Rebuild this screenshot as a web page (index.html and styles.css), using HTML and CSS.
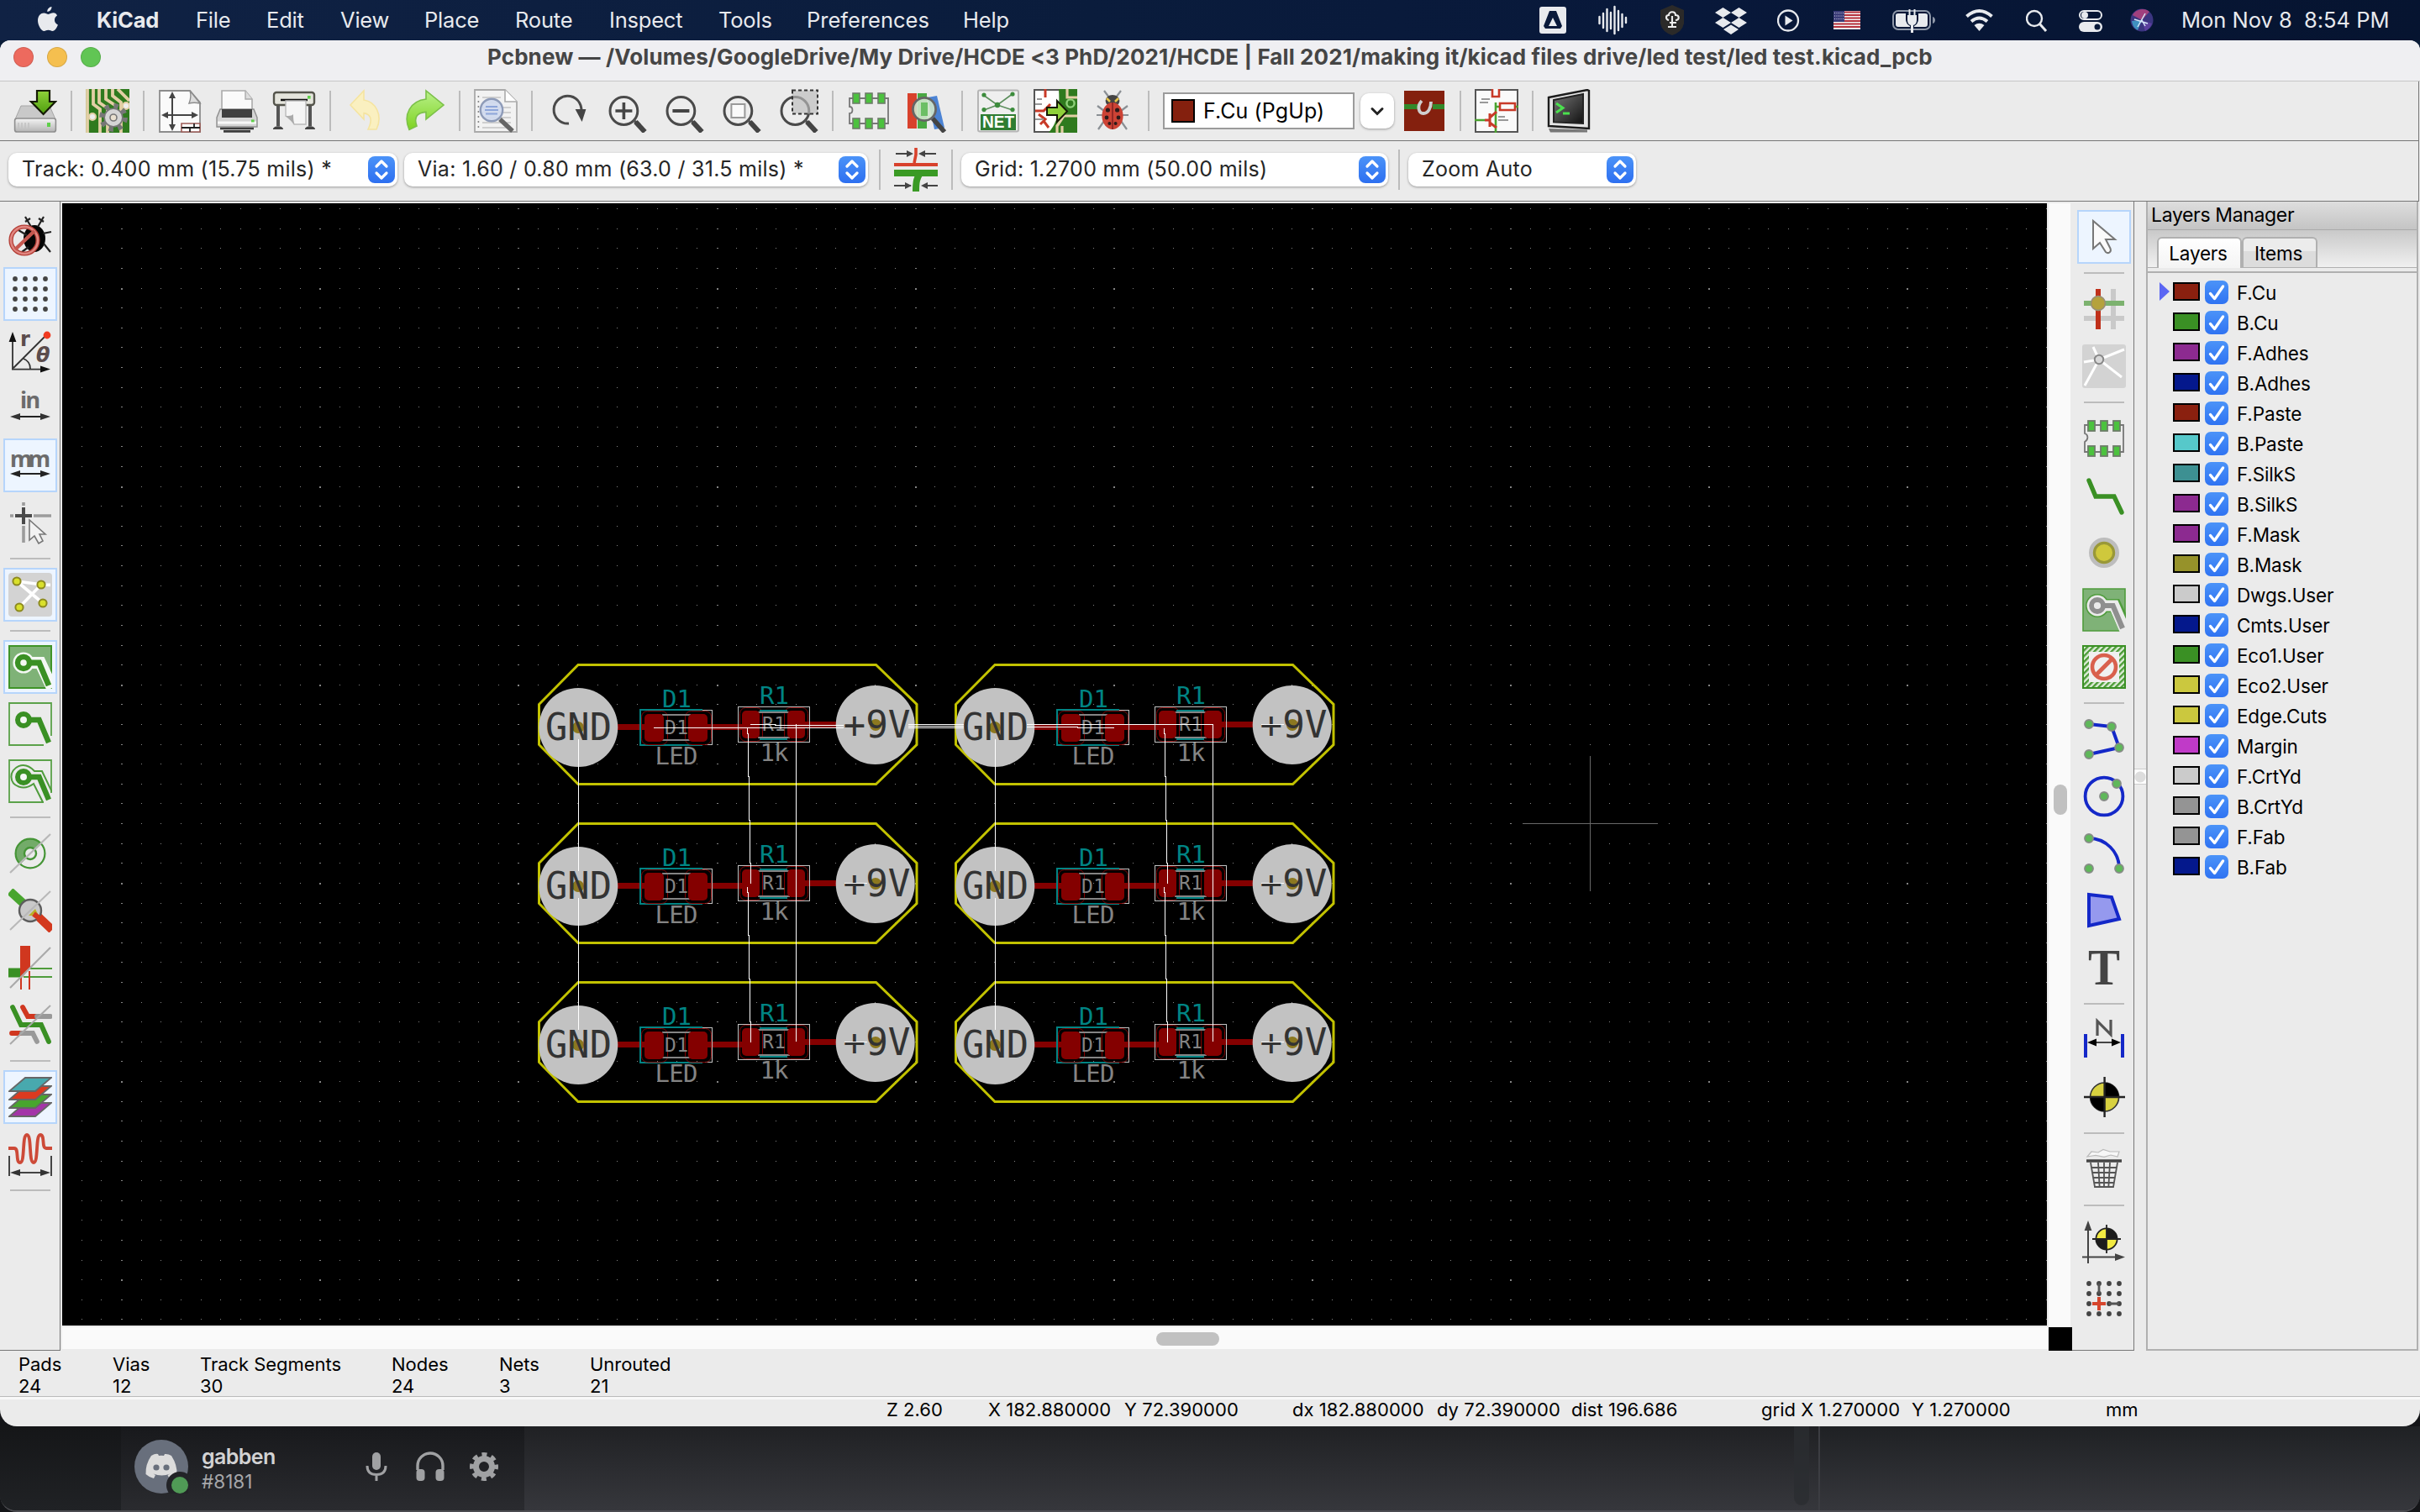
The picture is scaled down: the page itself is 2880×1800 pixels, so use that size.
FILE: index.html
```html
<!DOCTYPE html>
<html lang="en">
<head>
<meta charset="utf-8">
<title>Pcbnew</title>
<link rel="stylesheet" href="styles.css">
</head>
<body>
<svg class="sprite" width="0" height="0">
  <defs>
    <linearGradient id="gGreen" x1="0" y1="0" x2="0" y2="1"><stop offset="0" stop-color="#8fd13a"/><stop offset="1" stop-color="#4e9e0e"/></linearGradient>
    <linearGradient id="gRedo" x1="0" y1="0" x2="0" y2="1"><stop offset="0" stop-color="#b9f08a"/><stop offset="1" stop-color="#7ed321"/></linearGradient>
    <linearGradient id="gTerm" x1="0" y1="0" x2="1" y2="1"><stop offset="0" stop-color="#777"/><stop offset="1" stop-color="#111"/></linearGradient>
    <linearGradient id="gDrive" x1="0" y1="0" x2="0" y2="1"><stop offset="0" stop-color="#f4f4f4"/><stop offset="1" stop-color="#b4b4b4"/></linearGradient>
    <pattern id="hatch" width="2.4" height="2.4" patternUnits="userSpaceOnUse" patternTransform="rotate(45)"><rect width="2.4" height="2.4" fill="#dfeeda"/><rect width="1.2" height="2.4" fill="#4a9a35"/></pattern>
  </defs>
  <symbol id="save" viewBox="0 0 26 26"><path d="M4.500 10h17l3.500 8H1z" fill="#c9c9c9" stroke="#a5a5a5" stroke-width=".5"/><rect x=".8" y="17.500" width="24.400" height="8" rx="1.300" fill="url(#gDrive)" stroke="#8e8e8e" stroke-width=".8"/><path d="M3 20v4M5 20v4M7 20v4M9 20v4" stroke="#c2c2c2" stroke-width=".8"/><rect x="20" y="20" width="2" height="2.500" fill="#5fd04a"/><path d="M14 1h7.500v6.500H25L17.800 15 10.500 7.500H14z" fill="url(#gGreen)" stroke="#151a05" stroke-width="1.100"/></symbol>
  <symbol id="board" viewBox="0 0 26 26"><path d="M0 0h26v26H0z" fill="#2f7a1e"/><path d="M1 0v26M4.500 0v9l4 3v14M8 0v8l5 3.500V26M12 0v6l6 4M16 0v4l5 4v18M19 0l7 7" stroke="#e3cfa5" stroke-width="1.900" fill="none"/><circle cx="4" cy="16.500" r="2" fill="#eee" stroke="#e3cfa5"/><circle cx="24" cy="10" r="2" fill="#eee" stroke="#e3cfa5"/><circle cx="16.500" cy="17" r="6.800" fill="none" stroke="#777" stroke-width="3.300" stroke-dasharray="2.600 2.740"/><circle cx="16.500" cy="17" r="5.400" fill="#d5d5d5" stroke="#777" stroke-width=".8"/><circle cx="16.500" cy="17" r="2" fill="#e9e0cf" stroke="#777" stroke-width=".8"/></symbol>
  <symbol id="pageset" viewBox="0 0 26 26"><path d="M1 1h18l6 7v17.500H1z" fill="#fafafa" stroke="#8c8c8c" stroke-width=".9"/><path d="M19 1c1 3 .5 5-.5 7.500 2-.5 4-.5 6.500 0z" fill="#ddd" stroke="#8c8c8c" stroke-width=".7"/><path d="M8.500 3v21M3 15.500h20" stroke="#444" stroke-width="1"/><path d="M8.500 1.500l2 4h-4zM8.500 25l2-4h-4zM2 15.500l4-2v4zM24 15.500l-4-2v4z" fill="#444"/><path d="M14 20.500h11v5H14z" fill="#fff" stroke="#9b5b55" stroke-width=".8"/><path d="M14 23h11M19 23v2.500M21.500 20.500V23" stroke="#222" stroke-width=".9"/></symbol>
  <symbol id="print" viewBox="0 0 26 26"><path d="M4 13V1h14l4 5v8H4z" fill="#fafafa" stroke="#aaa" stroke-width=".8"/><path d="M18 1v5h4" fill="#ddd" stroke="#aaa" stroke-width=".7"/><path d="M3 12h20l2 5v5.500H1V17z" fill="#d5d5d5" stroke="#8e8e8e" stroke-width=".7"/><path d="M4 12h18v5H4z" fill="#3f3f3f"/><path d="M3 23.500h20M5 25.200h16" stroke="#3b3b3b" stroke-width="1.300"/><path d="M1.500 20h23" stroke="#f8f8f8" stroke-width="1.500"/><rect x="21.500" y="18.200" width="1.800" height="1.500" fill="#5fd04a"/></symbol>
  <symbol id="plot" viewBox="0 0 26 26"><rect x="1" y="2" width="24" height="7.500" rx="1.500" fill="#e5e5dd" stroke="#55554c" stroke-width="1.200"/><path d="M5 6.500h16" stroke="#111" stroke-width="1.200"/><rect x="21" y="4" width="1.800" height="1.800" fill="#5fd04a"/><path d="M3.500 10v12M22.500 10v12" stroke="#555" stroke-width="2"/><path d="M.5 24c0-2.500 6-2.500 6 0zM19.500 24c0-2.500 6-2.500 6 0z" fill="#444"/><path d="M8 7h12v14h-7c-1-2-3-4-5-5z" fill="#f5f5f5" stroke="#bbb" stroke-width=".7"/><path d="M8 16c2 0 3.500 0 4.500-1 0 3 .3 4.500.8 6z" fill="#aaa"/></symbol>
  <symbol id="undo" viewBox="0 0 26 26"><path d="M11.500 1v5.500c7 1 11.500 9 7.500 17.500h-5c3-6 1.500-9-2.500-9.700V18L3.500 9.500z" fill="#faf0c0" stroke="#f5e4a0" stroke-width=".8"/></symbol>
  <symbol id="redo" viewBox="0 0 26 26"><path d="M14.500 1v5C5.500 7 .5 15 4.500 24.200L9 22c-2-5.500.5-8 5.500-8.300V18L25 9.500z" fill="url(#gRedo)" stroke="#7cc04a" stroke-width=".8"/></symbol>
  <symbol id="find" viewBox="0 0 26 26"><path d="M.5.500h18l7 7v18H.5z" fill="#f2f2f2" stroke="#aaa" stroke-width=".9"/><path d="M18.500.500v7h7" fill="#fff" stroke="#aaa" stroke-width=".8"/><path d="M5 5h11M5 8h10M5 11h17M5 14h17M5 17h17M5 20h17M5 23h17" stroke="#c4c4c4" stroke-width=".8"/><path d="M2.700 4v20" stroke="#888" stroke-width=".8" stroke-dasharray="1 2"/><circle cx="10.500" cy="12.500" r="6.600" fill="#cfd9ee" fill-opacity=".9" stroke="#8e9bb8" stroke-width="1.200"/><path d="M7 10.500h7M6.500 12.500h8M7 14.700h7" stroke="#8ea6da"/><path d="M15.500 18l7.500 7" stroke="#666" stroke-width="2.700"/></symbol>
  <symbol id="refresh" viewBox="0 0 26 26"><path d="M13.500 20.500A8.200 8.200 0 1 1 20.500 15" fill="none" stroke="#4a4a4a" stroke-width="1.500"/><path d="M17.300 12h6.400l-2.400 7.500z" fill="#444"/></symbol>
  <symbol id="lens" viewBox="0 0 26 26"><circle cx="12.200" cy="13" r="8.200" fill="#ededed" stroke="#4a4a4a" stroke-width="1.500"/><path d="M17.700 18.500l3 2" stroke="#555" stroke-width="1.500"/><path d="M19.200 19.500l5.500 6" stroke="#444" stroke-width="3"/></symbol>
  <symbol id="zin" viewBox="0 0 26 26"><use href="#lens"/><path d="M7.200 13h10M12.200 8v10" stroke="#444" stroke-width="1.800"/></symbol>
  <symbol id="zout" viewBox="0 0 26 26"><use href="#lens"/><path d="M7.200 13h10" stroke="#444" stroke-width="2"/></symbol>
  <symbol id="zfit" viewBox="0 0 26 26"><use href="#lens"/><rect x="8.200" y="9" width="8" height="8" fill="#fafafa" stroke="#999"/></symbol>
  <symbol id="zsel" viewBox="0 0 26 26"><use href="#lens"/><rect x="10.500" y=".7" width="15" height="14" fill="#bbb" fill-opacity=".65" stroke="#333" stroke-width="1" stroke-dasharray="2 1.500"/></symbol>
  <symbol id="fp" viewBox="0 0 26 26"><path d="M1.500 5.500v5c2.300 0 2.300 4 0 4v6h23v-15z" fill="none" stroke="#777" stroke-width=".9"/><g fill="#4cc23e" stroke="#6d7d69" stroke-width=".8"><rect x="3.500" y="2.500" width="4" height="6"/><rect x="11" y="2.500" width="4" height="6"/><rect x="18.500" y="2.500" width="4" height="6"/><rect x="3.500" y="17.500" width="4" height="6"/><rect x="11" y="17.500" width="4" height="6"/><rect x="18.500" y="17.500" width="4" height="6"/></g></symbol>
  <symbol id="lib" viewBox="0 0 26 26"><path d="M2 2.500h5.500v21H2z" fill="#d8412c"/><path d="M8 2.500h5.500v21H8z" fill="#4aa843"/><path d="M14 5l5.500-1 4.500 19-6 1z" fill="#4b83d4"/><circle cx="12" cy="12" r="6.800" fill="#cfe5cc" fill-opacity=".9" stroke="#666" stroke-width="1.400"/><path d="M10 8h4v8h-4z" fill="#6cbf65"/><path d="M17 17.500l7 8" stroke="#444" stroke-width="2.800"/></symbol>
  <symbol id="upd" viewBox="0 0 26 26"><path d="M.5.500h25v25H.5z" fill="#fff" stroke="#555"/><path d="M15 0h11v26H9c4-5 7-10 6-26z" fill="#2f7a1e"/><path d="M26 16h-8l-4 6v4M20 0v5h6M17 26v-4" stroke="#e3cfa5" stroke-width="1.600" fill="none"/><circle cx="22" cy="8.500" r="2.300" fill="none" stroke="#8fd07a" stroke-width="1.200"/><path d="M7 0v5M1 13h5l4-4M6 19l3 4M3 15l4 3-3 3" stroke="#c83a28" stroke-width="1.500" fill="none"/><path d="M1 9h4M2 6h3M1 18h5" stroke="#999" stroke-width=".9"/><path d="M8 11h6V7l6 6.300-6 6.200v-4H8z" fill="#8fd13a" stroke="#151a05" stroke-width="1"/></symbol>
  <symbol id="bug" viewBox="0 0 26 26"><path d="M8 1l3 4M18 1l-3 4M4 10l4 3M22 10l-4 3M3.500 15.500h4M22.500 15.500h-4M4.500 24l3.500-5M21.500 24l-3.500-5" stroke="#8a8f94" stroke-width="1.100"/><ellipse cx="13" cy="7" rx="4.200" ry="3.500" fill="#444"/><path d="M9.500 5.500l2 2M16.500 5.500l-2 2" stroke="#e7c54a" stroke-width="1.300"/><ellipse cx="13" cy="16" rx="6.300" ry="8" fill="#cc4335"/><path d="M13 8v16" stroke="#822" stroke-width=".8"/><g fill="#2d1a1a"><circle cx="10.200" cy="12.500" r="1.300"/><circle cx="15.800" cy="12.500" r="1.300"/><circle cx="9.500" cy="17" r="1.200"/><circle cx="16.500" cy="17" r="1.200"/><circle cx="11.200" cy="20.500" r="1"/><circle cx="14.800" cy="20.500" r="1"/></g></symbol>
  <symbol id="pair" viewBox="0 0 26 26"><path d="M1 1h24v24H1z" fill="#84200e"/><path d="M1 9h24v3H1z" fill="#33892a"/><path d="M9 7h9v6H9z" fill="#84200e"/><path d="M11.500 7c-3 3-2 7.500 1 7.500s4.500-3.500 4.500-7" fill="none" stroke="#cfcfcf" stroke-width="1.900"/></symbol>
  <symbol id="sch" viewBox="0 0 26 26"><path d="M.5.500h25v25H.5z" fill="#fafafa" stroke="#555"/><path d="M12.500 8v14M0 18.500h6M12.500 10.500h3M24 10.500h2M12.500 21v5" stroke="#4aa32f" stroke-width="1.300"/><path d="M10.500 0v4.500h4V0M15 8.500h9v4h-9z" fill="#fafafa" stroke="#c83a28" stroke-width="1.300"/><path d="M6 18.500h3M9 14.500v8M9 17l4-3.500M9 20l4 3" stroke="#c83a28" stroke-width="1.500"/><path d="M4 6h5M3 8h5M14 16.500h4M14 18.500h6" stroke="#999" stroke-width=".9"/></symbol>
  <symbol id="term" viewBox="0 0 26 26"><path d="M1 5L24 .5l1 .5v22.500L1 22z" fill="#e4e4e4" stroke="#1c1c1c" stroke-width="1.200"/><path d="M4 6.500L21.500 3v17.500L4 19.700z" fill="url(#gTerm)" stroke="#222"/><path d="M5.500 8.500l4 2.700-4 2.800M9.500 14.500h4" stroke="#4be04e" stroke-width="1.500" fill="none"/><path d="M1 23.500l23 .8v1.500H2z" fill="#777"/></symbol>
  <symbol id="width" viewBox="0 0 26 26"><path d="M13 0v4l-1 5" stroke="#d8412c" stroke-width="1.800" fill="none"/><path d="M0 10h26" stroke="#d8412c" stroke-width="2"/><path d="M0 15h26M15.500 15c-2 3-2.500 5-2.500 11" stroke="#3a9a24" stroke-width="4" fill="none"/><path d="M1 3.500h9M25 3.500h-9M0 22.500h10M26 22.500h-9" stroke="#444"/><path d="M11.500 3.500l-4-2v4zM14.500 3.500l4-2v4zM10.500 22.500l-4-2v4zM16 22.500l4-2v4z" fill="#444"/></symbol>
  <symbol id="drc" viewBox="0 0 26 26"><ellipse cx="15.500" cy="14" rx="6.500" ry="8" fill="#050505"/><path d="M10 1l3.500 6M21 1l-3.500 6M10 4l3-2M21 4l-3-2M6 9l5 3M25.500 10l-5 1M21 17l4 5M8 22l4-3" stroke="#222" stroke-width="1.100"/><circle cx="9.500" cy="15" r="8" fill="none" stroke="#b33d35" stroke-width="2.600"/><circle cx="9.500" cy="15" r="8" fill="none" stroke="#e08680" stroke-width="1.300"/><path d="M4 20.500L15.500 9.500" stroke="#c65850" stroke-width="2.200"/></symbol>
  <symbol id="dots" viewBox="0 0 26 26"><path d="M4 4h18.100M4 10h18.100M4 16h18.100M4 22h18.100" stroke="#444" stroke-width="2.900" stroke-linecap="round" stroke-dasharray="0 6"/></symbol>
  <symbol id="cursor" viewBox="0 0 26 26"><path d="M1 9h2M15 9h10.500M9 1v2M9 15v10" stroke="#9c9c9c" stroke-width="1.800"/><path d="M4 9h10M9 4v10" stroke="#4a4a4a" stroke-width="2"/><path d="M12.500 11.500v12l3-2.500 2.500 4.500 2.500-1.500-2-4h3.500z" fill="#f2f2f2" stroke="#777" stroke-width=".8"/></symbol>
  <symbol id="rats" viewBox="0 0 26 26"><rect width="26" height="26" rx="2" fill="#d3d3d3"/><path d="M5 5l15 2 5 .2M5 5l15.500 13M6.500 20.500L19.500 7" stroke="#fff" stroke-width="1.800"/><g fill="#d9e02c" stroke="#8d8a20"><circle cx="5" cy="5" r="2.300"/><circle cx="19.500" cy="7" r="2.300"/><circle cx="20.500" cy="18" r="2.300"/><circle cx="6.500" cy="20.500" r="2.300"/></g></symbol>
  <symbol id="zone1" viewBox="0 0 26 26"><path d="M.5.500h25v25H.5z" fill="#7fb277" stroke="#3f9428"/><path d="M9 10.500h10l7 15" stroke="#f4f8f4" stroke-width="7" fill="none"/><circle cx="9" cy="10.500" r="6.300" fill="#f4f8f4"/><path d="M9 10.500h9.300L24 24" stroke="#3a9024" stroke-width="3.400" fill="none"/><circle cx="9" cy="10.500" r="3.500" fill="#f4f8f4" stroke="#3a9024" stroke-width="3.200"/></symbol>
  <symbol id="zone2" viewBox="0 0 26 26"><path d="M21 25.500H.5V.5h25V20" fill="none" stroke="#5ba24a" stroke-width=".9"/><path d="M9 10.500h9.300L24 24" stroke="#3a9024" stroke-width="3.200" fill="none"/><circle cx="9" cy="10.500" r="3.500" fill="#f4f8f4" stroke="#3a9024" stroke-width="3"/></symbol>
  <symbol id="zone3" viewBox="0 0 26 26"><use href="#zone2"/><path d="M26 19.500L20 7h-4.500C9 0 1.500 5 1.700 10.500S9 19 15 14.500l5.500 11" fill="none" stroke="#4f9c3c" stroke-width="1"/></symbol>
  <symbol id="padsk" viewBox="0 0 26 26"><path d="M7 19.500A8.500 8.500 0 1 1 20 7z" fill="#73ab69"/><circle cx="13" cy="13" r="8.700" fill="none" stroke="#459536" stroke-width="1.100"/><circle cx="13" cy="13" r="3.500" fill="#ebebeb" stroke="#459536" stroke-width="1.200"/><path d="M1 24.500l24-23" stroke="#b8b8b8" stroke-width="1.100"/></symbol>
  <symbol id="viask" viewBox="0 0 26 26"><path d="M1 1.500l12 11" stroke="#48a52e" stroke-width="5"/><path d="M14 13l12 11.500" stroke="#d3381d" stroke-width="5"/><circle cx="13" cy="13" r="6.500" fill="#c9c9c9" stroke="#5d5d5d" stroke-width="1.200"/><path d="M16 12l-4 4h6z" fill="#b9b128"/><path d="M15 15l4 3" stroke="#d3381d" stroke-width="3"/><path d="M1 24.500l24-23" stroke="#b8b8b8" stroke-width="1"/></symbol>
  <symbol id="trk" viewBox="0 0 26 26"><path d="M0 16h8" stroke="#3a9024" stroke-width="5.500"/><path d="M13 13.500h13M9 18.500h17" stroke="#4f9c3c"/><path d="M7 0h6v13l-5 6H7z" fill="#d0371f"/><path d="M7.500 18v8M12.500 15v11" stroke="#d0371f"/><path d="M1 25l24-24" stroke="#aaa" stroke-width="1.100"/></symbol>
  <symbol id="hc" viewBox="0 0 26 26"><path d="M2.500 2.500l5 10.500h12l4.500 10" stroke="#3a9024" stroke-width="2.900" fill="none" stroke-linecap="round"/><path d="M8.500 2.500l3 5.500H17M2 18h6" stroke="#d0371f" stroke-width="2.900" fill="none" stroke-linecap="round"/><path d="M17 8h8M8 18h6.500l2.500 5" stroke="#999" stroke-width="2.900" fill="none" stroke-linecap="round"/><path d="M1 24.500l24-23" stroke="#aaa"/></symbol>
  <symbol id="layers" viewBox="0 0 26 26"><g stroke="#666" stroke-width=".9"><path d="M10 16.500h15.500l-9.500 8H.5z" fill="#a335a8"/><path d="M10 11.500h15.500l-9.500 8H.5z" fill="#48a52e"/><path d="M10 6.500h15.500l-9.500 8H.5z" fill="#dc3a20"/><path d="M10 1.500h15.500l-9.500 8H.5z" fill="#48a9ae"/></g></symbol>
  <symbol id="tune" viewBox="0 0 26 26"><path d="M0 9.500h3.500c3 0 .5 8.500 3.500 8.500s1-16.500 4-16.500S12 18 15 18s1-16.500 4-16.500.5 8 3.500 8H26" fill="none" stroke="#cd4a38" stroke-width="1.900"/><path d="M.5 14v12M25.500 14v12M3 24h20" stroke="#444"/><path d="M1 24l6-2v4zM25 24l-6-2v4z" fill="#333"/></symbol>
  <symbol id="select" viewBox="0 0 26 26"><path d="M6.500 3.500v16.500l4-3.500 3.500 5.500c1.500 1.300 3.500 0 2.800-2L14 14.500H19.500z" fill="#fafafa" stroke="#777" stroke-width="1"/></symbol>
  <symbol id="hlnet" viewBox="0 0 26 26"><path d="M18.500 1v24M1 18.500h24" stroke="#c9c9c9" stroke-width="3"/><path d="M9.500 1v24" stroke="#c0301a" stroke-width="3"/><path d="M1 9.500h24" stroke="#7cb26f" stroke-width="3"/><circle cx="9.500" cy="9.500" r="4.200" fill="#b5a23c" stroke="#998f74" stroke-width=".8"/></symbol>
  <symbol id="lrats" viewBox="0 0 26 26"><rect width="26" height="26" rx="1.500" fill="#d3d3d3"/><path d="M10 9L6.500 1.500M10 9l15-6M10 9l-9 1.500M10 9L1.500 24.500M10 9l13.500 10.500" stroke="#fff" stroke-width="1.500"/><circle cx="10" cy="9" r="2.600" fill="#d8d8d8" stroke="#888"/></symbol>
  <symbol id="fp2" viewBox="0 0 26 26"><path d="M1.500 5v5c2 .5 2.500 3.500 0 5v6h23V5z" fill="none" stroke="#777" stroke-width=".9"/><g fill="#4cc23e" stroke="#6d7d69" stroke-width=".9"><rect x="3.500" y="2.500" width="4" height="6"/><rect x="11" y="2.500" width="4" height="6"/><rect x="18.500" y="2.500" width="4" height="6"/><rect x="3.500" y="17.500" width="4" height="6"/><rect x="11" y="17.500" width="4" height="6"/><rect x="18.500" y="17.500" width="4" height="6"/></g></symbol>
  <symbol id="route" viewBox="0 0 26 26"><path d="M4 4l4 9.500h11L23.500 23" stroke="#3a9024" stroke-width="2.700" fill="none" stroke-linecap="round"/></symbol>
  <symbol id="via" viewBox="0 0 26 26"><circle cx="13" cy="13" r="7.800" fill="#999838" stroke="#bdbdbd" stroke-width="2.400"/><circle cx="13" cy="13" r="5" fill="#cfc83c"/></symbol>
  <symbol id="zoneg" viewBox="0 0 26 26"><path d="M.5.500h25v25H.5z" fill="#7fb277" stroke="#4f9c3c" stroke-width=".8"/><path d="M9 10.500h10.500l7 15" stroke="#4f9c3c" stroke-width="8" fill="none"/><circle cx="9" cy="10.500" r="7" fill="#4f9c3c"/><path d="M9 10.500h10l7 16" stroke="#ebebeb" stroke-width="6.500" fill="none"/><circle cx="9" cy="10.500" r="6.200" fill="#ebebeb"/><path d="M9 10.500h9.300L24 24" stroke="#8f8f8f" stroke-width="3.100" fill="none"/><circle cx="9" cy="10.500" r="3.500" fill="#ebebeb" stroke="#8f8f8f" stroke-width="2.900"/></symbol>
  <symbol id="keep" viewBox="0 0 26 26"><path d="M.5.500h25v25H.5z" fill="url(#hatch)" stroke="#3a9024"/><rect x="4" y="4" width="18" height="18" fill="#f0f0f0"/><circle cx="13" cy="13" r="7" fill="none" stroke="#d9604d" stroke-width="2.300"/><path d="M8.500 17.500l9-9" stroke="#d9604d" stroke-width="2.500"/></symbol>
  <symbol id="lines" viewBox="0 0 26 26"><path d="M4 4l13.500 1.500L22 18 4 22" stroke="#1428c8" stroke-width="2" fill="none"/><g fill="#5fb85a" stroke="#868c86" stroke-width=".9"><circle cx="4" cy="4" r="2.500"/><circle cx="17.500" cy="5.500" r="2.500"/><circle cx="22" cy="18" r="2.500"/><circle cx="4" cy="22" r="2.500"/></g></symbol>
  <symbol id="circ" viewBox="0 0 26 26"><circle cx="13" cy="13" r="11.200" fill="none" stroke="#1428c8" stroke-width="1.900"/><g fill="#5fb85a" stroke="#868c86" stroke-width=".9"><circle cx="13" cy="13" r="2.500"/><circle cx="20.500" cy="5.500" r="2.500"/></g></symbol>
  <symbol id="arc" viewBox="0 0 26 26"><path d="M4 4c10 0 18 8 18 18" fill="none" stroke="#1428c8" stroke-width="1.900"/><g fill="#5fb85a" stroke="#868c86" stroke-width=".9"><circle cx="4" cy="4" r="2.500"/><circle cx="22" cy="22" r="2.500"/><circle cx="4" cy="22" r="2.500"/></g></symbol>
  <symbol id="poly" viewBox="0 0 26 26"><path d="M4 3.500L17.500 5 22 18 4 22z" fill="#9599ee" stroke="#1428c8" stroke-width="2"/></symbol>
  <symbol id="dim" viewBox="0 0 26 26"><path d="M2 9.500v14M24 9.500v14" stroke="#1428c8" stroke-width="2"/><path d="M4 14.500h18" stroke="#444"/><path d="M3 14.500l5.500-2.300v4.600zM23 14.500l-5.500-2.300v4.600z" fill="#000"/><path d="M9 10.500V1.800l8 8V1" fill="none" stroke="#555" stroke-width="1.600"/></symbol>
  <symbol id="target" viewBox="0 0 26 26"><circle cx="13.300" cy="13" r="8.500" fill="#d8d140" stroke="#333" stroke-width=".8"/><path d="M13.300 13V4.500a8.500 8.500 0 0 1 8.500 8.500zM13.300 13v8.500A8.500 8.500 0 0 1 4.800 13z" fill="#000"/><path d="M13.300 1v24M1 13h24.500" stroke="#222" stroke-width="1.200"/></symbol>
  <symbol id="trash" viewBox="0 0 26 26"><path d="M3 5.500l2.500-3 4 .5 3-1.800 4 1.300 5.500 0-1 3-4-1-4 1.200-5-1z" fill="#f7f7f7" stroke="#bbb" stroke-width=".6"/><path d="M2.500 8h21" stroke="#444" stroke-width="1.800"/><path d="M5 9l2.500 14.500h11L21 9M5.500 12h15M6 15h14M6.500 18h13M7 21h12M9.500 9l.8 14M13 9v14M16.500 9l-.8 14" fill="none" stroke="#555" stroke-width=".9"/></symbol>
  <symbol id="origin" viewBox="0 0 26 26"><path d="M3.500 26V4M0 22.300h22" stroke="#444"/><path d="M3.500.5l2.200 6H1.300zM25.500 22.300l-6-2.200v4.400z" fill="#444"/><circle cx="14.500" cy="11.500" r="6.300" fill="#f2ea42" stroke="#222" stroke-width=".9"/><path d="M14.500 11.500V5.200a6.300 6.300 0 0 1 6.300 6.300zM14.500 11.500v6.300a6.300 6.300 0 0 1-6.300-6.300z" fill="#1c1c1c"/><path d="M14.500 3v17M6 11.500h17" stroke="#222" stroke-width=".9"/></symbol>
  <symbol id="gorig" viewBox="0 0 26 26"><use href="#dots"/><path d="M10 4v6M16 16h6" stroke="#555" stroke-width="1.400"/><path d="M6 16h8M10 12v8" stroke="#d6452c" stroke-width="2"/></symbol>
</svg>

<div class="desktop">
  <header class="menubar">
    <svg class="apple" viewBox="0 0 26 32"><path d="M17.500 1c.2 3-2.400 6-5.200 6C12 4 14.600 1.200 17.500 1zM24 11.500c-4.500 2.800-3.800 9 .9 11-1 3-3.600 7.500-6.400 7.500-2 0-2.700-1.200-5-1.200s-3.200 1.200-5 1.200C5 30 1 23 1 17.500 1 11.700 4.700 8.500 8.200 8.500c2.300 0 3.900 1.400 5.500 1.400 1.500 0 3.300-1.600 6-1.600 1.800 0 3.400 1.200 4.300 3.200z" fill="#e8eaee"/></svg>
    <nav class="menus"><b style="width:118px">KiCad</b><span style="width:84px">File</span><span style="width:88px">Edit</span><span style="width:100px">View</span><span style="width:108px">Place</span><span style="width:112px">Route</span><span style="width:130px">Inspect</span><span style="width:105px">Tools</span><span style="width:186px" class="wide">Preferences</span><span>Help</span></nav>
    <div class="tray">
      <svg style="width:70px" viewBox="0 0 70 36"><path d="M3 2h26a3 3 0 0 1 3 3v26a3 3 0 0 1-3 3H3a3 3 0 0 1-3-3V5a3 3 0 0 1 3-3zM12 7L5 25l2 3h18l2-3-7-18zM16 15l5 10H11z" fill="#e8eaee" fill-rule="evenodd"/></svg>
      <svg style="width:74px" viewBox="0 0 74 36"><path d="M1.500 14v8M6 10v17M10.500 5v26M15 9v19M19.500 2v32M24 7v23M28.500 11v15M33 15v6" stroke="#e8eaee" stroke-width="2.400" stroke-linecap="round"/></svg>
      <svg style="width:65px" viewBox="0 0 65 36"><path d="M14 0l14 6v16q-2 10-14 14Q2 32 0 22V6z" fill="#2b2a29"/><path d="M9 26h10M11 21h8M14 13v13M10 18c-4-1-4-6 0-6 0-5 8-5 8 0 5 0 5 6 0 6" stroke="#eee" stroke-width="2.100" fill="none"/></svg>
      <svg style="width:74px" viewBox="0 0 74 36"><path d="M9.500 3l9.500 6-9.500 6L0 9zM28.500 3L38 9l-9.500 6L19 9zM9.500 15l9.500 6-9.500 6L0 21zM28.500 15l9.500 6-9.500 6-9.500-6zM19 23.500l9 5.500-9 6-9-6z" fill="#e8eaee"/></svg>
      <svg style="width:67px" viewBox="0 0 67 36"><circle cx="13" cy="18.500" r="12" fill="none" stroke="#e8eaee" stroke-width="2.300"/><path d="M9.500 12.500l9 6-9 6z" fill="#e8eaee"/></svg>
      <svg style="width:70px" viewBox="0 0 70 36"><path d="M0 7h32v22H0z" fill="#f2f2f2"/><path d="M0 8.500h32M0 12h32M0 15.500h32M0 19h32M0 22.500h32M0 26h32" stroke="#b5323c" stroke-width="1.800"/><path d="M0 7h13v13H0z" fill="#3a3c78"/><path d="M1 9.500h11M1 13h11M1 16.500h11" stroke="#ccd" stroke-width="1" stroke-dasharray="1 1.500"/></svg>
      <svg style="width:87px" viewBox="0 0 87 36"><rect x="1" y="7" width="44" height="22" rx="6" fill="none" stroke="#8e97a8" stroke-width="2"/><path d="M48 14c4 1 4 7 0 8z" fill="#8e97a8"/><path d="M4 12q0-2 3-2h9v7q0 5 5 8v1H7q-3 0-3-3zM42 12q0-2-3-2h-8v7q0 5-5 8v1h13q3 0 3-3z" fill="#e8eaee"/><path d="M18 12h11v6q0 5-4 6v9h-3v-9q-4-1-4-6zM19.500 5h2v7h-2zM25.500 5h2v7h-2z" fill="#e8eaee"/></svg>
      <svg style="width:72px" viewBox="0 0 72 36"><path d="M1.500 13.500q15-13 30 0M7 19.500q9.500-8 19 0" fill="none" stroke="#e8eaee" stroke-width="4"/><path d="M10.500 24q6-4.500 12 0l-6 7z" fill="#e8eaee"/></svg>
      <svg style="width:63px" viewBox="0 0 63 36"><circle cx="10" cy="16" r="9" fill="none" stroke="#e8eaee" stroke-width="2.400"/><path d="M16.500 22.500l7.500 8.500" stroke="#e8eaee" stroke-width="3"/></svg>
      <svg style="width:61px" viewBox="0 0 61 36"><rect x="1" y="7" width="26" height="10" rx="5" fill="none" stroke="#e8eaee" stroke-width="2"/><circle cx="7" cy="12" r="4" fill="#e8eaee"/><rect y="20" width="28" height="12" rx="6" fill="#e8eaee"/><circle cx="22" cy="26" r="3.500" fill="#08193a"/></svg>
      <svg style="width:61px" viewBox="0 0 61 36"><circle cx="14" cy="18" r="13.500" fill="#3b3580"/><path d="M14 18L3 12a13 13 0 0 1 20-4z" fill="#a0407e"/><path d="M14 18L2 19q1 8 7 11z" fill="#3f90c0"/><path d="M14 18l12 4q-2 6-8 9z" fill="#5b3f9e"/><path d="M5 17l16 5M9 26l9-16M14 18l4 7" stroke="#d6e8f8" stroke-width="1.500"/></svg>
      <time>Mon Nov 8&nbsp; 8:54 PM</time>
    </div>
  </header>

  <main class="window">
    <div class="titlebar"><i class="light red"></i><i class="light amber"></i><i class="light green"></i><h1>Pcbnew — /Volumes/GoogleDrive/My Drive/HCDE &lt;3 PhD/2021/HCDE | Fall 2021/making it/kicad files drive/led test/led test.kicad_pcb</h1></div>

    <div class="toolbar">
      <div class="tool"><svg><use href="#save"/></svg></div><hr>
      <div class="tool"><svg><use href="#board"/></svg></div><hr>
      <div class="tool"><svg><use href="#pageset"/></svg></div><div class="tool"><svg><use href="#print"/></svg></div><div class="tool"><svg><use href="#plot"/></svg></div><hr>
      <div class="tool"><svg><use href="#undo"/></svg></div><div class="tool"><svg><use href="#redo"/></svg></div><hr>
      <div class="tool"><svg><use href="#find"/></svg></div><hr>
      <div class="tool"><svg><use href="#refresh"/></svg></div><div class="tool"><svg><use href="#zin"/></svg></div><div class="tool"><svg><use href="#zout"/></svg></div><div class="tool"><svg><use href="#zfit"/></svg></div><div class="tool"><svg><use href="#zsel"/></svg></div><hr>
      <div class="tool"><svg><use href="#fp"/></svg></div><div class="tool"><svg><use href="#lib"/></svg></div><hr>
      <div class="tool"><svg viewBox="0 0 26 26"><rect x="1" y=".8" width="24" height="24.500" rx="1" fill="#efefef" stroke="#b5b5b5"/><path d="M4 3.500l8.500 6 9.500-7M12.500 9.500l-8 3M12.500 9.500l9 3" stroke="#5d8f5d" stroke-width=".8" fill="none"/><g fill="#3c8c3c"><circle cx="4.500" cy="3.500" r="1.300"/><circle cx="21.500" cy="3" r="1.300"/><circle cx="12.500" cy="9.500" r="1.600"/><circle cx="4.500" cy="12.300" r="1.300"/><circle cx="21.500" cy="12.300" r="1.300"/></g><path d="M2.500 15h21v9.500h-21z" fill="#2f7d32"/><text x="13" y="23.200" class="ic-net" textLength="19" lengthAdjust="spacingAndGlyphs">NET</text></svg></div><div class="tool"><svg><use href="#upd"/></svg></div><div class="tool"><svg><use href="#bug"/></svg></div><hr>
      <div class="layerbox"><i></i><span>F.Cu (PgUp)</span></div>
      <div class="drop"><svg viewBox="0 0 40 42"><path d="M14 18.500l6 6 6-6" fill="none" stroke="#222" stroke-width="3" stroke-linecap="round"/></svg></div>
      <div class="tool"><svg><use href="#pair"/></svg></div><hr>
      <div class="tool"><svg><use href="#sch"/></svg></div><hr>
      <div class="tool"><svg><use href="#term"/></svg></div>
    </div>

    <div class="optionbar">
      <div class="select track"><span>Track: 0.400 mm (15.75 mils) *</span><svg viewBox="0 0 32 32"><path d="M10 12l6-6 6 6M10 20l6 6 6-6"/></svg></div>
      <div class="select viasel"><span>Via: 1.60 / 0.80 mm (63.0 / 31.5 mils) *</span><svg viewBox="0 0 32 32"><path d="M10 12l6-6 6 6M10 20l6 6 6-6"/></svg></div>
      <hr><div class="tool"><svg><use href="#width"/></svg></div><hr>
      <div class="select grid"><span>Grid: 1.2700 mm (50.00 mils)</span><svg viewBox="0 0 32 32"><path d="M10 12l6-6 6 6M10 20l6 6 6-6"/></svg></div>
      <hr>
      <div class="select zoom"><span>Zoom Auto</span><svg viewBox="0 0 32 32"><path d="M10 12l6-6 6 6M10 20l6 6 6-6"/></svg></div>
    </div>

    <div class="work">
      <aside class="side left">
        <div class="tool"><svg><use href="#drc"/></svg></div><div class="tool on"><svg><use href="#dots"/></svg></div>
        <div class="tool"><svg viewBox="0 0 26 26"><path d="M2.500 24V4M2 23.800h19M3 23L22 4M13 23.500c0-3-1.500-5-4-6" stroke="#333" stroke-width=".9" fill="none"/><path d="M2.500 1.500l2.200 6H.3zM25 23.800l-6-2v4z" fill="#111"/><circle cx="23" cy="3.500" r="2.200" fill="#f03a20"/><text x="7" y="10" class="ic-txt">r</text><text x="16.500" y="19.500" class="ic-txt it">θ</text></svg></div>
        <div class="tool"><svg viewBox="0 0 26 26"><text x="13" y="13" class="ic-unit" textLength="12">in</text><path d="M4 18h18" stroke="#222"/><path d="M1 18l6-2v4zM25 18l-6-2v4z" fill="#333"/></svg></div>
        <div class="tool on"><svg viewBox="0 0 26 26"><text x="13" y="14" class="ic-unit" textLength="24">mm</text><path d="M4 18h18" stroke="#222"/><path d="M1 18l6-2v4zM25 18l-6-2v4z" fill="#222"/></svg></div>
        <div class="tool"><svg><use href="#cursor"/></svg></div><hr>
        <div class="tool on"><svg><use href="#rats"/></svg></div><hr>
        <div class="tool on"><svg><use href="#zone1"/></svg></div><div class="tool"><svg><use href="#zone2"/></svg></div><div class="tool"><svg><use href="#zone3"/></svg></div><hr>
        <div class="tool"><svg><use href="#padsk"/></svg></div><div class="tool"><svg><use href="#viask"/></svg></div><div class="tool"><svg><use href="#trk"/></svg></div><div class="tool"><svg><use href="#hc"/></svg></div><hr>
        <div class="tool on"><svg><use href="#layers"/></svg></div><div class="tool"><svg><use href="#tune"/></svg></div><hr>
      </aside>

      <section class="view">
        <svg class="canvas" viewBox="74 242 2362 1336">
          <path id="dotgrid" stroke="#848484" fill="none" shape-rendering="crispEdges"/>
          <g id="column">
            <g id="unit">
              <path d="M735 865.500h35M842 865.500h42" stroke="#840000" stroke-width="7"/>
              <path d="M958 862.500h38" stroke="#840000" stroke-width="7"/>
              <rect x="761.500" y="845.500" width="86" height="41" fill="none" stroke="#c2c2c2"/>
              <path d="M836 845H762v42h74" fill="none" stroke="#008484" stroke-width="2"/>
              <g fill="none" stroke="#840000"><rect x="763.500" y="846.500" width="31" height="40" rx="7"/><rect x="815.500" y="846.500" width="31" height="40" rx="7"/></g>
              <path d="M788 851h34M788 881h34" stroke="#848484" stroke-width="2"/>
              <g fill="#840000"><rect x="767" y="850" width="23" height="33" rx="5"/><rect x="819" y="850" width="23" height="33" rx="5"/></g>
              <rect x="878.500" y="841.500" width="85" height="42" fill="none" stroke="#c2c2c2"/>
              <g fill="none" stroke="#840000"><rect x="880.500" y="842.500" width="27" height="40" rx="7"/><rect x="933.500" y="842.500" width="28" height="40" rx="7"/></g>
              <path d="M904 846h33M904 880h33" stroke="#008484" stroke-width="2"/>
              <path d="M902 848h38M902 878h38" stroke="#848484" stroke-width="2"/>
              <g fill="#840000"><rect x="883" y="846" width="21" height="33" rx="5"/><rect x="937" y="846" width="21" height="33" rx="5"/></g>
              <g class="pcb silk"><text x="805.500" y="841.500" textLength="35" fill="#008484">D1</text><text x="921.500" y="838" textLength="35" fill="#008484">R1</text><text x="805" y="909.500" textLength="51" fill="#848484">LED</text><text x="921.500" y="905.500" textLength="34" fill="#848484">1k</text></g>
              <g class="pcb fab"><text x="805" y="874" textLength="28">D1</text><text x="921" y="870" textLength="28">R1</text></g>
              <path d="M688 791.500h354.500l48.500 47v48l-48.500 47H688l-46.500-47v-48z" fill="none" stroke="#c2c200" stroke-width="3"/>
              <circle cx="688.300" cy="866" r="47" fill="#c2c2c2"/><circle cx="1041.700" cy="863" r="47" fill="#c2c2c2"/>
              <circle cx="688" cy="866" r="7" fill="#8c7820"/><circle cx="1042" cy="863" r="7" fill="#8c7820"/>
              <g class="pcb pad"><text x="688.500" y="880.500" textLength="79" lengthAdjust="spacingAndGlyphs">GND</text><text x="1043.500" y="877.500" textLength="80" lengthAdjust="spacingAndGlyphs">+9V</text></g>
            </g>
            <use href="#unit" y="189"/><use href="#unit" y="378"/>
            <g stroke="#fff" fill="none" shape-rendering="crispEdges">
              <path d="M688.500 880v157M688.500 1069v157M947.500 862v378M889.500 867v6l1 0v51h1v52h1v51h1v25M889.500 1056v6l1 0v51h1v52h1v51h1v25M1005 1051.500h27M1005 1240.500h27"/>
            </g>
          </g>
          <use href="#column" x="496"/>
          <g stroke="#fff" fill="none" shape-rendering="crispEdges">
            <path d="M778 866.500h226M893 862.500h29v1h82M1081 862.500h66M1081 864.500h66M1081 866.500h66M1222 862.500h221.500M1222 865.500h60v1h44M1501 862.500h27"/>
            <path d="M1812 980.500h161M1892.500 900v161" stroke="#686868"/>
          </g>
        </svg>
        <div class="vscroll"><i></i></div>
        <div class="hscroll"><i></i></div>
        <div class="corner"></div>
      </section>

      <aside class="side right">
        <div class="tool on"><svg><use href="#select"/></svg></div><hr>
        <div class="tool"><svg><use href="#hlnet"/></svg></div><div class="tool"><svg><use href="#lrats"/></svg></div><hr>
        <div class="tool"><svg><use href="#fp2"/></svg></div><div class="tool"><svg><use href="#route"/></svg></div><div class="tool"><svg><use href="#via"/></svg></div><div class="tool"><svg><use href="#zoneg"/></svg></div><div class="tool"><svg><use href="#keep"/></svg></div><hr>
        <div class="tool"><svg><use href="#lines"/></svg></div><div class="tool"><svg><use href="#circ"/></svg></div><div class="tool"><svg><use href="#arc"/></svg></div><div class="tool"><svg><use href="#poly"/></svg></div>
        <div class="tool"><svg viewBox="0 0 26 26"><text x="13" y="22.800" class="ic-t" textLength="19" lengthAdjust="spacingAndGlyphs">T</text></svg></div><hr>
        <div class="tool"><svg><use href="#dim"/></svg></div><div class="tool"><svg><use href="#target"/></svg></div><hr>
        <div class="tool"><svg><use href="#trash"/></svg></div><hr>
        <div class="tool"><svg><use href="#origin"/></svg></div><div class="tool"><svg><use href="#gorig"/></svg></div>
      </aside>
      <div class="sash"><i></i></div>

      <aside class="manager">
        <h2>Layers Manager</h2>
        <div class="tabs"><span class="tab active">Layers</span><span class="tab">Items</span></div>
        <ul class="layers" id="layerlist"></ul>
      </aside>
    </div>

    <div class="counts">
      <dl style="width:112px"><dt>Pads</dt><dd>24</dd></dl><dl style="width:104px"><dt>Vias</dt><dd>12</dd></dl><dl style="width:228px"><dt>Track Segments</dt><dd>30</dd></dl><dl style="width:128px"><dt>Nodes</dt><dd>24</dd></dl><dl style="width:108px"><dt>Nets</dt><dd>3</dd></dl><dl><dt>Unrouted</dt><dd>21</dd></dl>
    </div>
    <div class="status">
      <span style="width:121px">Z 2.60</span><span style="width:162px">X 182.880000</span><span style="width:200px">Y 72.390000</span><span style="width:172px">dx 182.880000</span><span style="width:160px">dy 72.390000</span><span style="width:226px">dist 196.686</span><span style="width:179px">grid X 1.270000</span><span style="width:231px">Y 1.270000</span><span>mm</span>
    </div>
  </main>

  <footer class="chat">
    <div class="rail"></div>
    <div class="user">
      <svg class="avatar" viewBox="0 0 64 64"><circle cx="32" cy="32" r="32" fill="#686f7c"/><path d="M20 19q5-3 8-2l1 2q3-.5 6 0l1-2q4-.5 8 2 7 11 6.500 22-4 4-9 5l-2-4 3-1.500q-10 4-20 0L25 42l-2 4q-5-1-9.500-5Q13 29 20 19z" fill="#dcdcdc"/><circle cx="26" cy="33" r="3.600" fill="#686f7c"/><circle cx="38" cy="33" r="3.600" fill="#686f7c"/><circle cx="54" cy="54" r="16" fill="#222327"/><circle cx="54" cy="54" r="10" fill="#509a56"/></svg>
      <div class="who"><b>gabben</b><span>#8181</span></div>
      <svg class="ctl" viewBox="0 0 40 40"><rect x="15" y="3" width="10" height="21" rx="5"/><path d="M9 19q0 10.500 11 10.500T31 19M20 29v8" fill="none" stroke="#a0a1a3" stroke-width="3"/></svg>
      <svg class="ctl" viewBox="0 0 40 40"><path d="M5 24v-5a15 15 0 0 1 30 0v5" fill="none" stroke="#a0a1a3" stroke-width="3.400"/><rect x="3.500" y="23" width="10" height="14" rx="4"/><rect x="26.500" y="23" width="10" height="14" rx="4"/></svg>
      <svg class="ctl" viewBox="0 0 40 40"><circle cx="20" cy="20" r="9.500" fill="none" stroke="#a0a1a3" stroke-width="7"/><circle cx="20" cy="20" r="14.500" fill="none" stroke="#a0a1a3" stroke-width="5" stroke-dasharray="6 5.388" stroke-dashoffset="3"/></svg>
    </div>
    <div class="messages"><i class="bar"></i></div>
    <div class="members"></div>
  </footer>
</div>
<script src="app.js"></script>
</body>
</html>
```
FILE: styles.css
```css
* { box-sizing: border-box; }
body { margin: 0; font-family: Inter, "Liberation Sans", sans-serif; background: #0a1c38; color: #000; }
h1, h2, dl, dd, ul { margin: 0; padding: 0; }
.sprite { display: block; position: absolute; }
.desktop { width: 2880px; height: 1800px; overflow: hidden; display: flex; flex-direction: column; background: linear-gradient(#0a1c38, #141518 1650px); }

.menubar { height: 48px; flex: none; display: flex; align-items: center; background: linear-gradient(90deg, #102244, #0a1c3c 45%, #08183a 70%, #061430); color: #e8eaee; font-size: 25.500px; }
.apple { width: 26px; height: 32px; margin: -3px 45px 0 44px; }
.menus { display: flex; flex: 1; }
.menus > * { white-space: nowrap; letter-spacing: -.2px; margin-top: -1px; }
.menus b { font-weight: 700; }
.menus .wide { letter-spacing: 0; }
.tray { display: flex; align-items: center; width: 1048px; white-space: nowrap; }
.tray svg { height: 36px; flex: none; }
.tray time { letter-spacing: -.02px; margin-top: -2px; }

.window { height: 1650px; flex: none; display: flex; flex-direction: column; background: #ebebeb; border-radius: 12px 12px 20px 20px; overflow: hidden; }
.titlebar { height: 49px; flex: none; display: flex; align-items: center; gap: 16px; padding: 0 0 8px 16px; background: #efeff2; border-bottom: 1px solid #c6c6c6; }
.light { width: 24px; height: 24px; flex: none; border-radius: 50%; border: 1px solid rgba(0,0,0,.12); }
.red { background: #ed6a5e; } .amber { background: #f5bf4f; } .green { background: #61c554; }
.titlebar h1 { margin: -2px 0 0 444px; font-size: 26px; font-weight: 700; color: #454545; white-space: nowrap; letter-spacing: .1px; }

.toolbar, .optionbar { flex: none; display: flex; align-items: center; padding-left: 8px; border-bottom: 1px solid #777; border-right: 1px solid #777; margin-right: 1px; }
.toolbar { height: 71px; }
.optionbar { height: 72px; padding: 0 0 3px 10px; }
.tool { width: 68px; height: 68px; flex: none; display: flex; align-items: center; justify-content: center; }
.tool svg { width: 52px; height: 52px; }
.toolbar hr, .optionbar hr { flex: none; width: 2px; height: 48px; margin: 0 8px; border: 0; background: #bcbcbc; }
.layerbox { width: 228px; height: 44px; margin-left: 8px; display: flex; align-items: center; gap: 10px; padding-left: 8px; background: #fff; border: 2px solid #9b9b9b; font-size: 25px; letter-spacing: .1px; }
.layerbox i { width: 28px; height: 28px; background: #84200e; border: 2px solid #000; }
.drop { width: 40px; height: 42px; margin: 0 2px 0 7px; border-radius: 10px; background: #fff; box-shadow: 0 1px 3px rgba(0,0,0,.35); }
.drop svg { display: block; }
.select { height: 40px; flex: none; display: flex; align-items: center; justify-content: space-between; padding: 0 3px 0 16px; background: #fff; border-radius: 10px; box-shadow: 0 1px 3px rgba(0,0,0,.35); font-size: 25px; color: #262626; white-space: nowrap; letter-spacing: .27px; }
.select span { margin-top: -2px; }
.select svg { width: 32px; height: 32px; border-radius: 8px; background: linear-gradient(#4b93f8, #2d6ff0); }
.select path { fill: none; stroke: #fff; stroke-width: 3.200; stroke-linecap: round; stroke-linejoin: round; }
.track { width: 463px; margin-right: 8px; }
.viasel { width: 552px; margin-right: 5px; }
.grid { width: 508px; margin-left: 2px; margin-right: 4px; }
.zoom { width: 271px; margin-left: 2px; }

.work { height: 1368px; flex: none; display: flex; }
.side { display: flex; flex-direction: column; align-items: center; padding-top: 8px; border-right: 1px solid #777; border-bottom: 1px solid #777; }
.left { width: 72px; }
.side hr { width: 48px; height: 2px; flex: none; margin: 8px 0; border: 0; background: #bcbcbc; }
.on { width: 64px; height: 64px; margin: 2px 0; background: #edf5ff; border: 2px solid #b6d5fb; }
.view { width: 2394px; padding: 2px 0 0 2px; display: grid; grid-template: 1338px 28px / 2364px 28px; }
.canvas { width: 2362px; height: 1336px; background: #000; display: block; }
.vscroll { width: 26px; background: #fafafa; padding: 692px 0 0 6px; }
.vscroll i { display: block; width: 16px; height: 36px; border-radius: 8px; background: #c1c1c1; }
.hscroll { height: 26px; background: #fafafa; padding: 6px 0 0 1302px; }
.hscroll i { display: block; width: 75px; height: 16px; border-radius: 8px; background: #c1c1c1; }
.corner { background: #000; }
.right { width: 74px; padding-left: 3px; }
.sash { width: 14px; padding-top: 675px; }
.sash i { display: block; height: 19px; background: radial-gradient(circle at 7px 9px, #ddd 6px, #fff 7px); border: solid #ccc; border-width: 1px 0; }

.manager { width: 324px; border: 2px solid #b0b0b0; border-width: 0 2px 2px; }
.manager h2 { height: 34px; padding-left: 4px; font-size: 23px; letter-spacing: -.35px; line-height: 33px; font-weight: 400; background: linear-gradient(#dedede, #c4c4c4); border-bottom: 1px solid #aaa; }
.tabs { height: 51px; padding: 8px 0 0 11px; display: flex; align-items: flex-start; background: linear-gradient(#c9c9c9, #f0f0f0 44px, #b0b0b0 44px, #b0b0b0 45px, #ebebeb 45px, #ebebeb 49px, #b0b0b0 49px); }
.tab { height: 36px; width: 90px; line-height: 36px; text-align: center; font-size: 22.500px; letter-spacing: -.2px; padding-right: 3px; border: 2px solid #b0b0b0; border-bottom: 0; border-radius: 6px 6px 0 0; background: linear-gradient(#ececec 45%, #dcdcdc 45%); }
.tab.active { width: 101px; height: 37px; background: linear-gradient(#fff, #f4f4f4); }
.layers { list-style: none; padding: 5px 0 0 14px; }
.layers li { height: 36px; display: flex; align-items: center; font-size: 22.500px; letter-spacing: -.15px; }
.arrow { width: 16px; height: 22px; margin-top: -2px; }
.arrow.cur { background: #5b66f3; clip-path: polygon(0 0, 12px 50%, 0 100%); }
.swatch { width: 32px; height: 22px; margin: -2px 6px 0 0; border: 2px solid #000; }
.check { width: 28px; height: 28px; margin-right: 10px; border-radius: 7px; background: linear-gradient(#4b93f8, #2f73f2); }
.check path { fill: none; stroke: #fff; stroke-width: 3.400; stroke-linecap: round; stroke-linejoin: round; }

.counts { height: 55px; flex: none; display: flex; padding: 3px 0 0 22px; font-size: 22px; line-height: 26px; border-bottom: 1px solid #bbb; letter-spacing: -.03px; }
.status { flex: 1; display: flex; padding-left: 1055px; font-size: 22px; line-height: 24px; white-space: nowrap; letter-spacing: .03px; border-top: 3px solid #f8f8f8; }

.chat { height: 102px; flex: none; display: flex; border-bottom: 2px solid #4b4b50; border-radius: 0 0 20px 20px; overflow: hidden; background: #1d1f22; }
.rail { width: 144px; background: linear-gradient(#151618, #202225); }
.user { width: 480px; display: flex; align-items: center; padding: 0 24px 5px 16px; background: linear-gradient(#18191c, #2a2b2f); }
.avatar { width: 64px; height: 64px; margin-right: 16px; }
.who { width: 184px; display: flex; flex-direction: column; padding-top: 7px; line-height: 29px; font-size: 22.500px; color: #a6a7a9; }
.who b { font-size: 25px; font-weight: 600; color: #d2d2d3; letter-spacing: -.6px; }
.ctl { width: 40px; height: 40px; margin-left: 24px; fill: #a0a1a3; }
.who + .ctl { margin-left: 4px; }
.messages { width: 1542px; padding-left: 1511px; background: linear-gradient(#202124, #36373c); border-right: 2px solid #3c3d42; }
.bar { display: block; width: 18px; height: 94px; border-radius: 0 0 9px 9px; background: #2b2d31; opacity: .8; }
.members { flex: 1; background: linear-gradient(#1f2124, #36373c); }

.pcb { font-family: "DejaVu Sans Mono", monospace; text-anchor: middle; }
.silk { font-size: 29px; }
.fab { font-size: 23px; fill: #848484; }
.pad { font-size: 44px; fill: #333; }
.ic-net { font: 700 10px "Liberation Sans", sans-serif; fill: #fff; text-anchor: middle; }
.ic-txt { font: 700 12px "DejaVu Sans", sans-serif; fill: #5b4c4c; }
.it { font-style: italic; }
.ic-unit { font: 700 13.500px "Noto Sans", sans-serif; fill: #6b6b6b; text-anchor: middle; }
.ic-t { font: 700 31px "Liberation Serif", serif; fill: #444; text-anchor: middle; }
```
FILE: app.js
```js
// Grid dots: 1.27 mm pitch on screen, with every tenth row and column heavier.
const pitch = 23.615, x0 = 144.6, y0 = 343;
let d = "";
for (let j = -4; j < 53; j++) {
  const y = Math.floor(y0 + j * pitch);
  if (y < 242 || y > 1577) continue;
  for (let i = -3; i < 98; i++) {
    const x = Math.floor(x0 + i * pitch);
    if (x < 75 || x > 2435) continue;
    const w = i % 10 === 0 ? 2 : 1;
    d += `M${x} ${y + 0.5}h${w}`;
    if (w === 2 && j % 10 === 0) d += `M${x} ${y + 1.5}h2`;
  }
}
document.getElementById("dotgrid").setAttribute("d", d);

// Layer list rows.
const rows = [
  ["F.Cu", "#8a200f"], ["B.Cu", "#3a9024"], ["F.Adhes", "#8c2a90"], ["B.Adhes", "#04188c"],
  ["F.Paste", "#8a200f"], ["B.Paste", "#56c8ca"], ["F.SilkS", "#3d9092"], ["B.SilkS", "#8c2a90"],
  ["F.Mask", "#8c2a90"], ["B.Mask", "#96922a"], ["Dwgs.User", "#cbcbcb"], ["Cmts.User", "#04188c"],
  ["Eco1.User", "#3a9024"], ["Eco2.User", "#cbc83e"], ["Edge.Cuts", "#cbc83e"], ["Margin", "#c03ac8"],
  ["F.CrtYd", "#cbcbcb"], ["B.CrtYd", "#949494"], ["F.Fab", "#949494"], ["B.Fab", "#04188c"]
];
document.getElementById("layerlist").innerHTML = rows.map(([name, color], i) =>
  `<li><i class="arrow${i ? "" : " cur"}"></i><i class="swatch" style="background:${color}"></i>` +
  `<svg class="check" viewBox="0 0 28 28"><path d="M6.500 15.500l5 6L21.500 7"/></svg>${name}</li>`).join("");
```
